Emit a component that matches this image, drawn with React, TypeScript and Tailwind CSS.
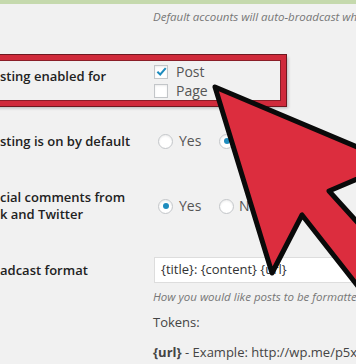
const font = { fontFamily: '"Open Sans", "Liberation Sans", sans-serif' };

const Checkbox = ({ checked }: { checked?: boolean }) => (
  <span className="flex items-center justify-center w-[14px] h-[14px] bg-white border border-[#c3c6c9] shadow-[inset_0_1px_2px_rgba(0,0,0,0.08)]">
    {checked && (
      <svg width="11" height="11" viewBox="0 0 12 12">
        <path d="M1.5 6.2 L4.6 9.2 L10.6 2.4" fill="none" stroke="#1e8cbe" strokeWidth="2.2" />
      </svg>
    )}
  </span>
);

const Radio = ({ checked }: { checked?: boolean }) => (
  <span className="flex items-center justify-center w-[15px] h-[15px] rounded-full bg-white border border-[#c3c6c9] shadow-[inset_0_1px_2px_rgba(0,0,0,0.08)]">
    {checked && <span className="w-[6px] h-[6px] rounded-full bg-[#1e8cbe]" />}
  </span>
);

const YesNo = ({ yes }: { yes: boolean }) => (
  <div className="flex items-center pl-[5px] text-[14px] leading-[20px] text-[#555]">
    <Radio checked={yes} />
    <span className="ml-[6px] w-[40px]">Yes</span>
    <Radio checked={!yes} />
    <span className="ml-[5px]">No</span>
  </div>
);

export default function App() {
  return (
    <div className="relative w-[356px] h-[364px] overflow-hidden bg-[#f1f1f1]" style={font}>
      <div className="h-[4px] bg-[#c5d9ad]" />
      <div className="mt-[5px] pl-[153px] text-[11.5px] leading-[16px] italic text-[#777] whitespace-nowrap">
        Default accounts will auto-broadcast when publishing
      </div>

      <div className="flex mt-[37px]">
        <div className="w-[153px] pt-[5px] text-[13px] leading-[19px] font-semibold text-[#222]">sting enabled for</div>
        <div className="flex flex-col text-[14px] leading-[19px] text-[#555]">
          <label className="flex items-center gap-[8px] pl-[1px]">
            <Checkbox checked />
            Post
          </label>
          <label className="flex items-center gap-[8px] pl-[1px]">
            <Checkbox />
            Page
          </label>
        </div>
      </div>

      <div className="flex items-center mt-[31px]">
        <div className="w-[153px] text-[13px] leading-[20px] font-semibold text-[#222]">sting is on by default</div>
        <YesNo yes={false} />
      </div>

      <div className="flex items-center mt-[38px]">
        <div className="w-[153px] text-[13px] leading-[17px] font-semibold text-[#222]">
          <div>cial comments from</div>
          <div>k and Twitter</div>
        </div>
        <YesNo yes />
      </div>

      <div className="flex items-center mt-[34px]">
        <div className="w-[153px] text-[13px] leading-[20px] font-semibold text-[#222]">adcast format</div>
        <div className="flex items-center flex-1 h-[26px] ml-[1px] pl-[6px] bg-white border border-[#ddd] text-[13px] text-[#333] whitespace-nowrap">
          {"{title}: {content} {url}"}
        </div>
      </div>

      <div className="pl-[153px] mt-[6px] text-[11.5px] leading-[16px] italic text-[#777] whitespace-nowrap">
        How you would like posts to be formatted when broadcasting
      </div>
      <div className="pl-[153px] mt-[8px] text-[13px] leading-[18px] text-[#444]">Tokens:</div>
      <div className="pl-[153px] mt-[12px] text-[13px] leading-[18px] text-[#444] whitespace-nowrap">
        <span className="font-bold">{"{url}"}</span> - Example: http://wp.me/p5xy2
      </div>

      <div className="absolute left-[-10px] top-[55px] w-[296px] h-[51px] border-[5px] border-[#d02a3b] shadow-[0_0_0_1px_#6e1820,inset_0_0_0_1px_#8a1e28,2px_2px_3px_rgba(0,0,0,0.25)]" />

      <svg className="absolute inset-0" width="356" height="364" viewBox="0 0 356 364">
        <polygon
          points="215,87 395,163 329,191 509,389 482,444 302,215 272,273"
          fill="#dc2d3e"
          stroke="#0a0a0a"
          strokeWidth="5"
          strokeLinejoin="round"
        />
      </svg>
    </div>
  );
}
